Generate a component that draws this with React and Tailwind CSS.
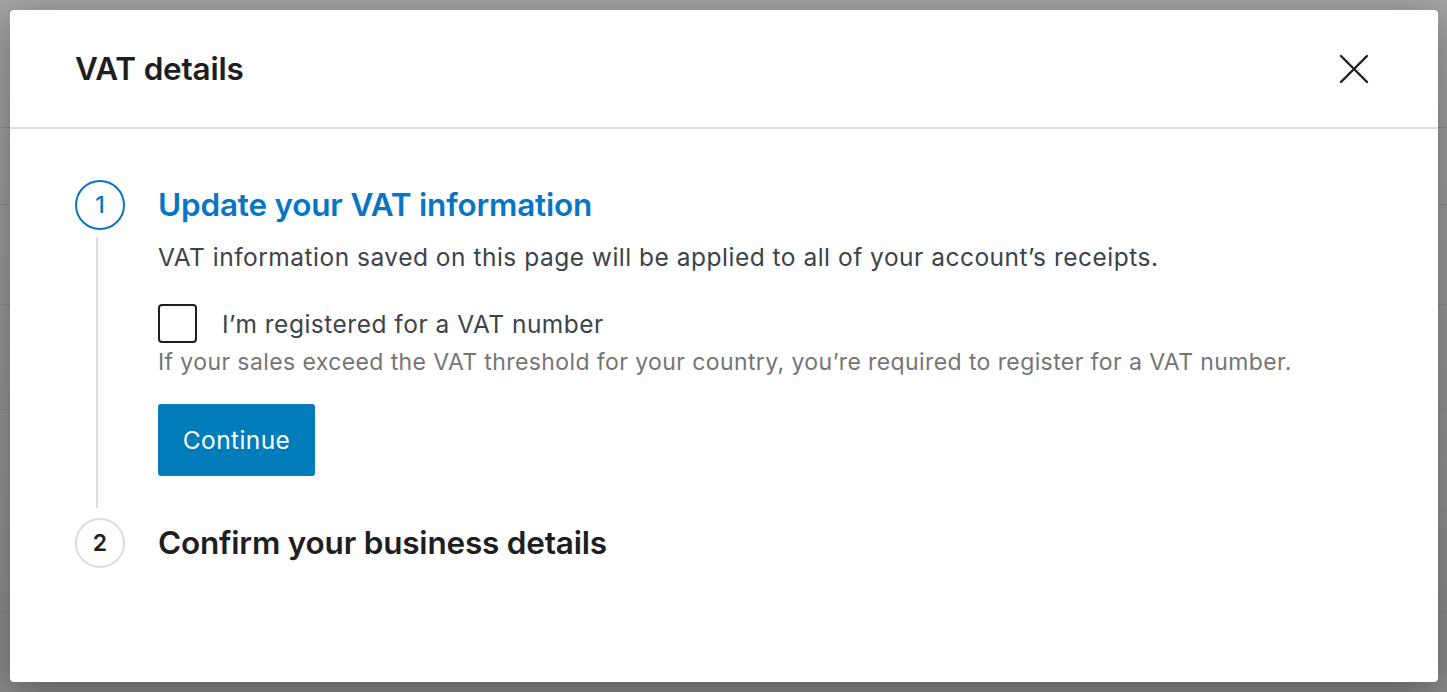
import React from "react";

export default function App() {
  return (
    <div className="relative w-[1447px] h-[692px] overflow-hidden bg-gradient-to-b from-[#a4a4a4] to-[#8a8a8a]" style={{ fontFamily: "Inter, 'Noto Sans', sans-serif" }}>
      {/* underlying page rows */}
      <div className="flex flex-col">
        <div className="h-[128px] border-b border-[#8a8a8a]" />
        <div className="h-[77px] border-b border-[#8a8a8a]" />
        <div className="h-[100px] border-b border-[#8a8a8a]" />
        <div className="h-[105px] border-b border-[#8a8a8a]" />
        <div className="h-[100px] border-b border-[#8a8a8a]" />
        <div className="h-[102px] border-b border-[#8a8a8a]" />
      </div>
      {/* modal */}
      <div className="absolute left-[10px] top-[10px] w-[1428px] h-[672px] bg-white rounded-[4px] shadow-[0_10px_40px_rgba(0,0,0,0.35)] flex flex-col">
        <div className="h-[119px] shrink-0 border-b-2 border-[#dcdcde] flex items-center justify-between pl-[65px] pr-[68px]">
          <h1 className="text-[31.5px] font-semibold text-[#1e1e1e] tracking-[-0.2px] leading-[40px]">VAT details</h1>
          <svg width="32" height="32" viewBox="0 0 32 32" fill="none" stroke="#1e1e1e" strokeWidth="2.4" strokeLinecap="round">
            <path d="M3 3 L29 29 M29 3 L3 29" />
          </svg>
        </div>
        <div className="pl-[65px] pt-[51px]">
          <div className="flex">
            <div className="w-[50px] shrink-0 flex flex-col items-center">
              <div className="w-[50px] h-[50px] rounded-full border-2 border-[#0675c4] flex items-center justify-center text-[23px] font-medium text-[#0675c4]">1</div>
              <div className="w-[2px] flex-1 bg-[#dcdcde] mt-[7px] mb-[10px] -translate-x-[3px]" />
            </div>
            <div className="ml-[33px] pb-[42px]">
              <h2 className="text-[31.5px] leading-[50px] font-semibold text-[#0675c4] tracking-[-0.2px]">Update your VAT information</h2>
              <p className="mt-[12px] text-[24.5px] leading-[30px] tracking-[0.5px] text-[#3c434a]">VAT information saved on this page will be applied to all of your account’s receipts.</p>
              <div className="mt-[32px] flex items-center">
                <div className="w-[39px] h-[39px] rounded-[4px] border-2 border-[#1e1e1e]" />
                <span className="ml-[25px] text-[24.5px] leading-[30px] tracking-[0.5px] text-[#3c434a]">I’m registered for a VAT number</span>
              </div>
              <p className="mt-[4px] text-[23px] leading-[30px] tracking-[0.4px] text-[#757575]">If your sales exceed the VAT threshold for your country, you’re required to register for a VAT number.</p>
              <button className="mt-[27px] w-[157px] h-[72px] bg-[#007cba] rounded-[3px] text-white text-[24.5px] tracking-[0.4px]">Continue</button>
            </div>
          </div>
          <div className="flex items-center">
            <div className="w-[50px] h-[50px] rounded-full border-2 border-[#dcdcde] flex items-center justify-center text-[23px] font-semibold text-[#1e1e1e]">2</div>
            <h2 className="ml-[33px] text-[31.5px] leading-[50px] font-semibold text-[#1e1e1e] tracking-[-0.2px]">Confirm your business details</h2>
          </div>
        </div>
      </div>
    </div>
  );
}
